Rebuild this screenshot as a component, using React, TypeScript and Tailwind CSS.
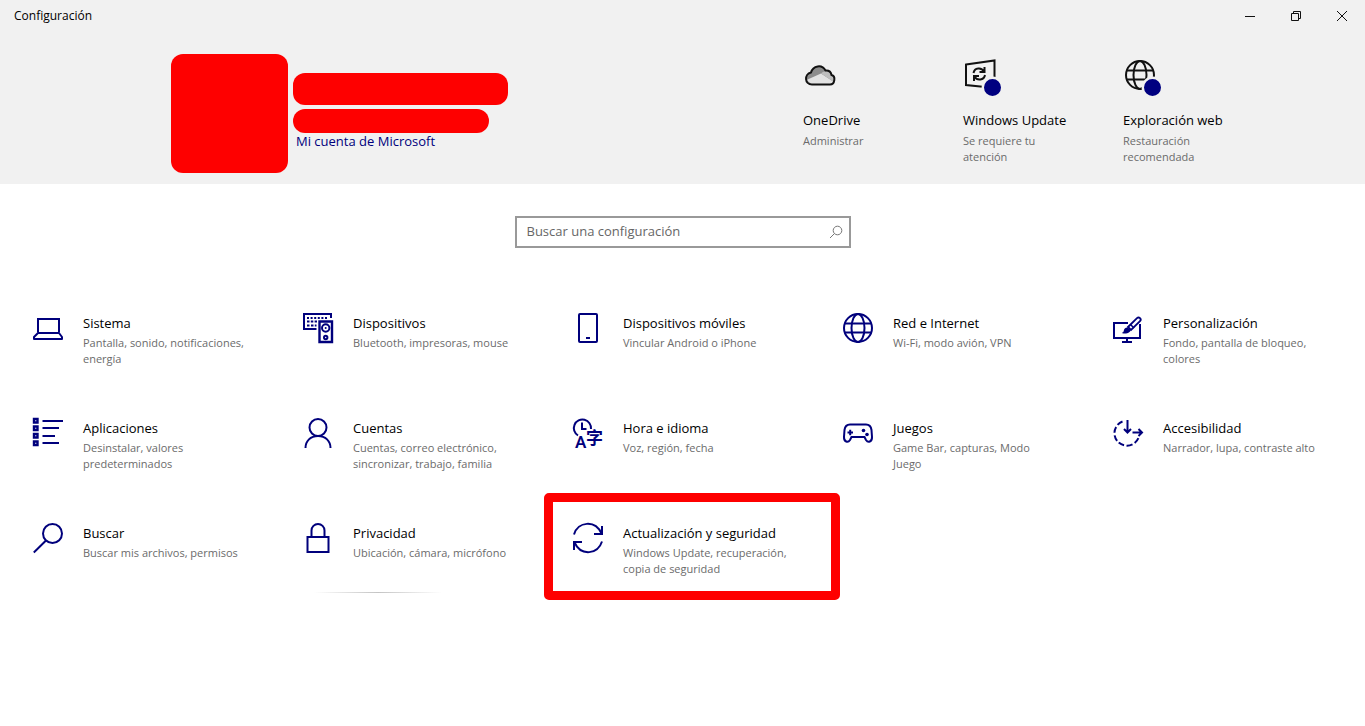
import type { ReactNode } from "react";

interface Category {
  title: string;
  description: string;
  icon: ReactNode;
  highlighted?: boolean;
  shadow?: boolean;
}

interface Status {
  title: string;
  description: string;
  icon: ReactNode;
}

function Icon({ children }: { children: ReactNode }) {
  return (
    <svg
      aria-hidden
      viewBox="0 0 30 30"
      fill="none"
      stroke="currentColor"
      strokeWidth="2"
      className="size-[30px] shrink-0 overflow-visible text-[#00007c]"
    >
      {children}
    </svg>
  );
}

const categories: Category[] = [
  {
    title: "Sistema",
    description: "Pantalla, sonido, notificaciones, energía",
    icon: (
      <Icon>
        <path d="M5 19.5V6h21v13.5" />
        <path d="M5 20h21l3 4v2H1v-2z" strokeLinejoin="round" />
      </Icon>
    ),
  },
  {
    title: "Dispositivos",
    description: "Bluetooth, impresoras, mouse",
    icon: (
      <Icon>
        <path d="M28 5V1H1v15h12.500" />
        <path d="M4 5h21" strokeDasharray="2 1.600" />
        <path d="M4 8.500h10M4 12.500h2.500M8 12.500h5.500" strokeDasharray="2.500 1.300" />
        <path d="M16.500 8.500H29V29H16.500z" strokeWidth="2.400" />
        <circle cx="22.700" cy="15" r="3.700" />
        <circle cx="22.700" cy="15" r="1" fill="currentColor" stroke="none" />
        <circle cx="22.700" cy="24.500" r="1.700" />
      </Icon>
    ),
  },
  {
    title: "Dispositivos móviles",
    description: "Vincular Android o iPhone",
    icon: (
      <Icon>
        <rect x="6" y="1" width="18" height="28" rx="1" />
        <path d="M13 25h4" />
      </Icon>
    ),
  },
  {
    title: "Red e Internet",
    description: "Wi-Fi, modo avión, VPN",
    icon: (
      <Icon>
        <circle cx="15" cy="15" r="14" />
        <ellipse cx="15" cy="15" rx="6.500" ry="14" />
        <path d="M2 10.500h26M2 19.500h26" />
      </Icon>
    ),
  },
  {
    title: "Personalización",
    description: "Fondo, pantalla de bloqueo, colores",
    icon: (
      <Icon>
        <path d="M15 10H1v15h26V11M14 25v4M9 29h10" />
        <path d="M15 14 24 5.200a2 2 0 0 1 3 3L18 17z" strokeWidth="1.800" />
        <path d="M17.500 11.500l3.500 3.500" strokeWidth="1.500" />
        <path
          d="M14.500 14.500c-2.500 0-3.500 1.500-3.700 3.300-.2 1.200-.9 1.800-2 2.200 3.500 1.300 8.700.5 8.700-3.200z"
          fill="currentColor"
          stroke="none"
        />
      </Icon>
    ),
  },
  {
    title: "Aplicaciones",
    description: "Desinstalar, valores predeterminados",
    icon: (
      <Icon>
        <path d="M1 1h3.500v3.500H1zM1 8.500h3.500V12H1zM1 16h3.500v3.500H1zM1 23.500h3.500V27H1z" strokeWidth="2.400" />
        <path d="M9.500 3H30M9.500 10H26M9.500 18H22M9.500 25H26" />
      </Icon>
    ),
  },
  {
    title: "Cuentas",
    description: "Cuentas, correo electrónico, sincronizar, trabajo, familia",
    icon: (
      <Icon>
        <circle cx="15" cy="9.500" r="8.500" />
        <path d="M2.500 30c0-7 5-12 12.500-12s12.500 5 12.500 12" />
      </Icon>
    ),
  },
  {
    title: "Hora e idioma",
    description: "Voz, región, fecha",
    icon: (
      <Icon>
        <path d="M5 17.500A8.600 8.600 0 1 1 18 11" />
        <path d="M9 4.500v6.500h4.500" />
        <g fill="currentColor" stroke="none">
          <text x="2" y="30" fontSize="17" fontWeight="600" fontFamily="Roboto, sans-serif">
            A
          </text>
          <text x="13" y="26" fontSize="17" fontWeight="700" fontFamily="Noto Sans CJK SC, sans-serif">
            字
          </text>
        </g>
      </Icon>
    ),
  },
  {
    title: "Juegos",
    description: "Game Bar, capturas, Modo Juego",
    icon: (
      <Icon>
        <path d="M7 6.500h16c3.500 0 5 2 5.500 5.500l.5 7c.2 5-4 6-6 3l-1.500-3h-13L7 22c-2 3-6.200 2-6-3l.5-7C2 8.500 3.500 6.500 7 6.500z" />
        <path d="M4.500 14.500h5.500M7.200 11.800v5.500" />
        <circle cx="20.500" cy="12.500" r="1.800" fill="currentColor" stroke="none" />
        <circle cx="24" cy="16.500" r="1.800" fill="currentColor" stroke="none" />
      </Icon>
    ),
  },
  {
    title: "Accesibilidad",
    description: "Narrador, lupa, contraste alto",
    icon: (
      <Icon>
        <path d="M9.500 3.500A12.500 12.500 0 1 0 26 18.500" strokeDasharray="6 2.500" />
        <path d="M14.500 2v12.500M11 11l3.500 3.500L18 11M19.500 14.500H29M25.500 11l3.500 3.500-3.500 3.500" />
      </Icon>
    ),
  },
  {
    title: "Buscar",
    description: "Buscar mis archivos, permisos",
    icon: (
      <Icon>
        <circle cx="19.500" cy="10.500" r="9.500" />
        <path d="M13 17.500.800 29.500" />
      </Icon>
    ),
  },
  {
    title: "Privacidad",
    description: "Ubicación, cámara, micrófono",
    shadow: true,
    icon: (
      <Icon>
        <path d="M4.500 14h21v15h-21zM8.500 14V7.500a6.500 6.500 0 0 1 13 0V14" />
      </Icon>
    ),
  },
  {
    title: "Actualización y seguridad",
    description: "Windows Update, recuperación, copia de seguridad",
    highlighted: true,
    icon: (
      <Icon>
        <path d="M1 11.500C5-1.500 22-3.500 28.500 10.500M29 3v8h-8" />
        <path d="M29 18.500C25 31.500 8 33.500 1.500 19.500M1 27v-8h8" />
      </Icon>
    ),
  },
];

function PendingDot() {
  return <circle cx="29.500" cy="29.500" r="9.700" fill="#000080" stroke="#f1f1f1" strokeWidth="2.400" />;
}

function StatusIcon({ children }: { children: ReactNode }) {
  return (
    <svg
      aria-hidden
      viewBox="0 0 40 40"
      fill="none"
      stroke="#111"
      strokeWidth="2"
      className="size-10"
    >
      {children}
    </svg>
  );
}

const statuses: Status[] = [
  {
    title: "OneDrive",
    description: "Administrar",
    icon: (
      <StatusIcon>
        <path
          d="M9 26.500C1.500 26.500 1 16 8 14.500 10 7.500 19 6 22.500 12.500c3.500-.3 5.500 1.500 6 4.500 4.500 1 3.500 9.500-1.500 9.500z"
          fill="#8c8c8c"
          stroke="none"
        />
        <path d="M3.500 22 18 15.500 31 24l-4 2.500H9z" fill="#e2e2e2" stroke="none" />
        <path d="M18 15.500c3-3.500 9-3.500 10.500 1.500 2.500 1 3.500 4 2.500 7z" fill="#bdbdbd" stroke="none" />
        <path d="M9 26.500C1.500 26.500 1 16 8 14.500 10 7.500 19 6 22.500 12.500c3.500-.3 5.500 1.500 6 4.500 4.500 1 3.500 9.500-1.500 9.500z" />
      </StatusIcon>
    ),
  },
  {
    title: "Windows Update",
    description: "Se requiere tu atención",
    icon: (
      <StatusIcon>
        <path d="M3 6.500 31.500 2.500v27.500L3 27z" />
        <path d="M10.500 15c1-5.500 8-6 10.500-1.500M21.500 9v5h-5M22 17c-1 5.500-8 6-10.500 1.500M11 23v-5h5" />
        <PendingDot />
      </StatusIcon>
    ),
  },
  {
    title: "Exploración web",
    description: "Restauración recomendada",
    icon: (
      <StatusIcon>
        <circle cx="17" cy="17" r="14" />
        <ellipse cx="17" cy="17" rx="6.500" ry="14" />
        <path d="M4 12.500h26M4 21.500h26" />
        <PendingDot />
      </StatusIcon>
    ),
  },
];

function TitleBar() {
  return (
    <div className="flex h-8 items-center justify-between">
      <span className="pl-3.5 text-xs">Configuración</span>
      <div className="flex h-full">
        <button type="button" aria-label="Minimizar" className="flex w-[46px] items-center justify-center">
          <svg viewBox="0 0 12 12" className="size-3" stroke="#111" fill="none">
            <path d="M1 6.500h10" />
          </svg>
        </button>
        <button type="button" aria-label="Restaurar" className="flex w-[46px] items-center justify-center">
          <svg viewBox="0 0 12 12" className="size-3" stroke="#111" fill="none">
            <path d="M1.500 3.500h7v7h-7zM3.500 3.500v-2h7v7h-2" />
          </svg>
        </button>
        <button type="button" aria-label="Cerrar" className="flex w-[46px] items-center justify-center">
          <svg viewBox="0 0 12 12" className="size-3" stroke="#111" fill="none">
            <path d="m1 1 10 10M11 1 1 11" />
          </svg>
        </button>
      </div>
    </div>
  );
}

function Account() {
  return (
    <div className="flex gap-[5px]">
      <div className="h-[119px] w-[117px] rounded-xl bg-[#fe0000]" />
      <div className="flex flex-col items-start pt-[19px]">
        <div className="h-8 w-[215px] rounded-xl bg-[#fe0000]" />
        <div className="mt-1 h-6 w-[196px] rounded-xl bg-[#fe0000]" />
        <a href="#cuenta" className="pl-[3px] text-[13px] leading-4 text-[#00007c]">
          Mi cuenta de Microsoft
        </a>
      </div>
    </div>
  );
}

function CategoryTile({ category }: { category: Category }) {
  return (
    <li className="relative">
      <a href="#categoria" className="flex h-full gap-5 pt-[30px] pr-7 pl-[25px]">
        {category.icon}
        <span className="flex flex-col gap-0.5">
          <span className="text-[13px] leading-5">{category.title}</span>
          <span className="text-[11px] leading-4 text-[#6b6b6b]">{category.description}</span>
        </span>
      </a>
      {category.shadow && (
        <span
          aria-hidden
          className="absolute top-[99px] left-9 h-px w-32 bg-linear-to-r from-transparent via-[#c4c4c4] to-transparent"
        />
      )}
      {category.highlighted && (
        <span
          aria-hidden
          className="pointer-events-none absolute top-0 -right-[22px] -left-1 h-[107px] rounded-[5px] border-9 border-[#fe0000]"
        />
      )}
    </li>
  );
}

export default function App() {
  return (
    <div className="min-h-screen bg-white font-['Open_Sans','Noto_Sans',sans-serif] text-black">
      <header className="bg-[#f1f1f1] pb-[11px]">
        <TitleBar />
        <div className="flex justify-between pt-[22px] pr-[82px] pl-[171px]">
          <Account />
          <ul className="flex">
            {statuses.map((s) => (
              <li key={s.title} className="w-40">
                <a href="#estado" className="flex flex-col items-start pt-1">
                  {s.icon}
                  <span className="mt-3 text-[13px] leading-5">{s.title}</span>
                  <span className="mt-[3px] max-w-28 text-[11px] leading-4 text-[#6b6b6b]">{s.description}</span>
                </a>
              </li>
            ))}
          </ul>
        </div>
      </header>

      <main>
        <form className="mx-auto mt-8 flex h-8 w-[336px] items-center border-2 border-[#999]">
          <input
            type="text"
            aria-label="Buscar una configuración"
            placeholder="Buscar una configuración"
            className="min-w-0 flex-1 pl-2.5 text-[13px] outline-none placeholder:text-[#666]"
          />
          <button type="submit" aria-label="Buscar" className="px-1.5">
            <svg viewBox="0 0 14 14" className="size-3.5" fill="none" stroke="#777">
              <circle cx="8.500" cy="5.500" r="4.300" />
              <path d="M5.500 8.500 1 13" />
            </svg>
          </button>
        </form>

        <ul className="mt-[35px] grid auto-rows-[minmax(105px,auto)] grid-cols-5 pr-[7px] pl-2">
          {categories.map((c) => (
            <CategoryTile key={c.title} category={c} />
          ))}
        </ul>
      </main>
    </div>
  );
}
